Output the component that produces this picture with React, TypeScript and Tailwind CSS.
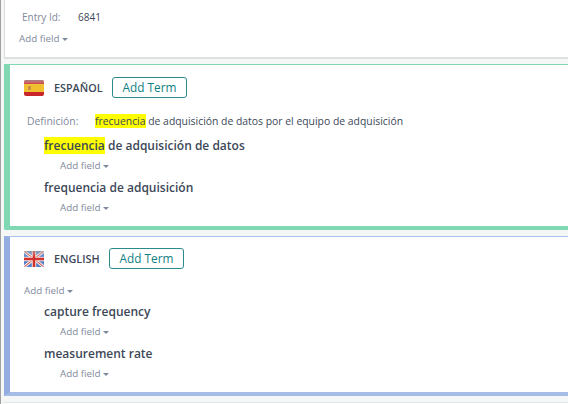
const font = "font-['Open_Sans',sans-serif]";

function AddField({ className = '' }: { className?: string }) {
  return (
    <div className={`flex items-center text-[9.8px] leading-[14px] text-[#7f8a9c] ${className}`}>
      Add field
      <span className="ml-[3px] mt-[1px] h-0 w-0 border-x-[3px] border-t-[3px] border-x-transparent border-t-[#7f8a9c]" />
    </div>
  );
}

function SpainFlag() {
  return (
    <svg width="20" height="16" viewBox="0 0 20 16" className="shrink-0">
      <defs>
        <linearGradient id="esGloss" x1="0" y1="0" x2="0" y2="1">
          <stop offset="0" stopColor="#9a9a9a" stopOpacity="0.75" />
          <stop offset="0.3" stopColor="#ffffff" stopOpacity="0" />
        </linearGradient>
      </defs>
      <rect width="20" height="16" rx="2" fill="#c8262b" />
      <rect y="4" width="20" height="8" fill="#f0c030" />
      <rect x="4" y="6" width="3" height="4" rx="1" fill="#c98a4a" />
      <rect width="20" height="16" rx="2" fill="url(#esGloss)" />
    </svg>
  );
}

function UkFlag() {
  return (
    <svg width="20" height="16" viewBox="0 0 20 16" className="shrink-0">
      <defs>
        <linearGradient id="ukGloss" x1="0" y1="0" x2="0" y2="1">
          <stop offset="0" stopColor="#9a9a9a" stopOpacity="0.6" />
          <stop offset="0.35" stopColor="#ffffff" stopOpacity="0" />
        </linearGradient>
        <clipPath id="ukClip">
          <rect width="20" height="16" rx="2" />
        </clipPath>
      </defs>
      <g clipPath="url(#ukClip)">
        <rect width="20" height="16" fill="#4f7fc8" />
        <path d="M0 0L20 16M20 0L0 16" stroke="#f0e4e4" strokeWidth="3" />
        <path d="M0 0L20 16M20 0L0 16" stroke="#d2453f" strokeWidth="1" />
        <path d="M10 0V16M0 8H20" stroke="#f0e4e4" strokeWidth="4.5" />
        <path d="M10 0V16M0 8H20" stroke="#d2302c" strokeWidth="2.5" />
        <rect width="20" height="16" fill="url(#ukGloss)" />
      </g>
    </svg>
  );
}

function LangHeader({ flag, name }: { flag: React.ReactNode; name: string }) {
  return (
    <div className="flex items-center">
      {flag}
      <span className="ml-[10px] text-[10.8px] font-semibold leading-[16px] text-[#3c4858]">{name}</span>
      <button className="ml-auto h-[21px] w-[75px] rounded-[3px] border border-[#2a8a8c] text-center text-[11.8px] leading-[17px] text-[#0f7f82]">
        Add Term
      </button>
    </div>
  );
}

function Term({ children }: { children: React.ReactNode }) {
  return (
    <div className="pl-[34px]">
      <div className="text-[12px] font-semibold leading-[18px] text-[#3c4858]">{children}</div>
      <AddField className="ml-4 mt-[4px]" />
    </div>
  );
}

export default function App() {
  return (
    <div className={`${font} h-[404px] w-[568px] overflow-hidden border-l border-[#a0a0a0] bg-[#f5f6f6] pl-[3px]`}>
      <div className="h-[59px] border-b-[2px] border-l border-b-[#e0e0e0] border-l-[#dcdcdc] bg-white pl-[14px] pt-[10px]">
        <div className="flex pl-[3px] text-[10px] leading-[14px]">
          <span className="w-[56px] text-[#7f8a9c]">Entry Id:</span>
          <span className="text-[#3c4858]">6841</span>
        </div>
        <AddField className="mt-[8px]" />
      </div>

      <div className="mt-[5px] h-[166px] rounded-bl-[2px] border-t border-b-[4px] border-l-[6px] border-[#7fd8b2] bg-white pt-[12px]">
        <div className="w-[177px] pl-[14px]">
          <LangHeader flag={<SpainFlag />} name="ESPAÑOL" />
        </div>
        <div className="mt-[16px] flex pl-[17px] text-[10.4px] leading-[14px]">
          <span className="w-[68px] text-[#7f8a9c]">Definición:</span>
          <span className="text-[#3c4858]">
            <span className="bg-[#ffff00]">frecuencia</span> de adquisición de datos por el equipo de adquisición
          </span>
        </div>
        <div className="mt-[9px] flex flex-col gap-[6px]">
          <Term>
            <span className="bg-[#ffff00]">frecuencia</span> de adquisición de datos
          </Term>
          <Term>frequencia de adquisición</Term>
        </div>
      </div>

      <div className="mt-[6px] h-[160px] border-t border-b-[4px] border-l-[6px] border-t-[#a9c3e8] border-b-[#a4bce6] border-l-[#94ade0] bg-white pt-[11px]">
        <div className="w-[174px] pl-[14px]">
          <LangHeader flag={<UkFlag />} name="ENGLISH" />
        </div>
        <AddField className="ml-[14px] mt-[15px]" />
        <div className="mt-[5px] flex flex-col gap-[6px]">
          <Term>capture frequency</Term>
          <Term>measurement rate</Term>
        </div>
      </div>

      <div className="mt-[6px] h-[10px] border-t border-[#dfe5ea] bg-white" />
    </div>
  );
}
